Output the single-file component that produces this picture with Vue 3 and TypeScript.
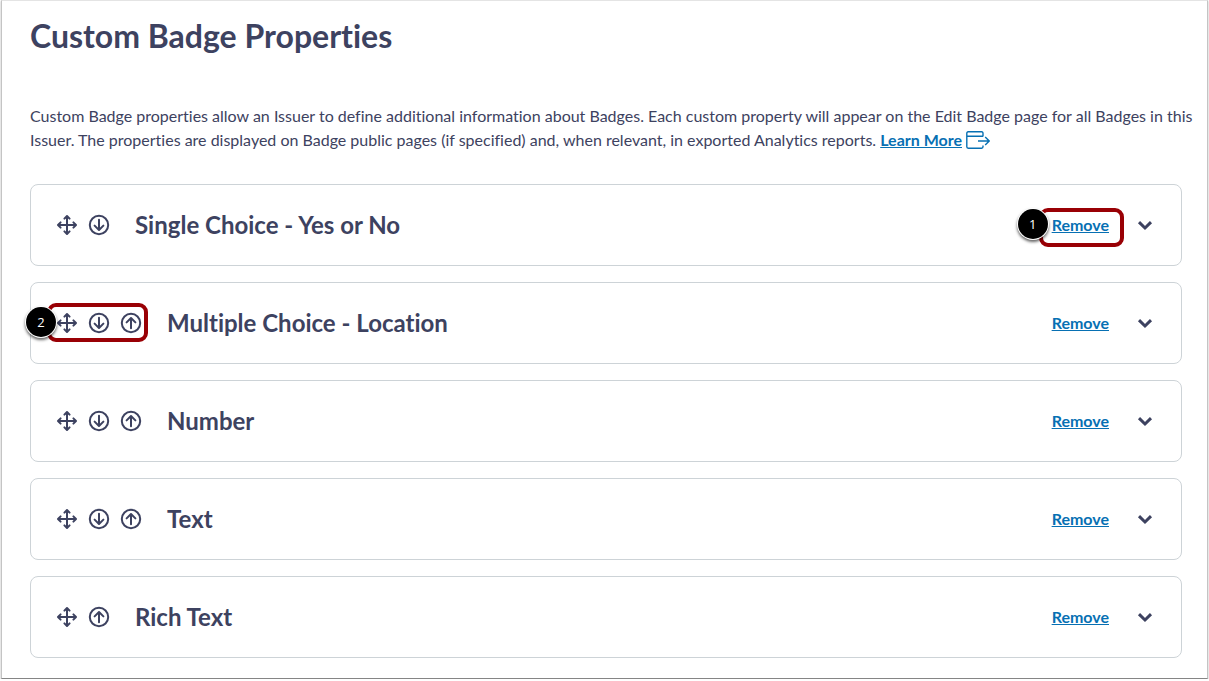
<script setup lang="ts">
interface BadgeProperty {
  name: string
  down: boolean
  up: boolean
  removeStep?: number
  orderStep?: number
}

const properties: BadgeProperty[] = [
  { name: 'Single Choice - Yes or No', down: true, up: false, removeStep: 1 },
  { name: 'Multiple Choice - Location', down: true, up: true, orderStep: 2 },
  { name: 'Number', down: true, up: true },
  { name: 'Text', down: true, up: true },
  { name: 'Rich Text', down: false, up: true },
]
</script>

<template>
  <main class="page">
    <h1 class="title">Custom Badge Properties</h1>
    <p class="intro">
      Custom Badge properties allow an Issuer to define additional information about Badges. Each custom property will
      appear on the Edit Badge page for all Badges in this Issuer. The properties are displayed on Badge public pages
      (if specified) and, when relevant, in exported Analytics reports.
      <a class="learn" href="#">Learn More<svg class="external" width="24" height="18" viewBox="0 0 24 18" aria-hidden="true">
        <path d="M17 5.500V2.200Q17 .8 15.600 .8H2.200Q.8 .8 .8 2.200V15.800Q.8 17.200 2.200 17.200H15.600Q17 17.200 17 15.800V14.500M.8 5.200H17M12 10H23M19.200 6L23.200 10L19.200 14" />
      </svg></a>
    </p>

    <ul class="list">
      <li v-for="item in properties" :key="item.name" class="card">
        <div class="order">
          <button class="icon-button" type="button" :aria-label="`Drag ${item.name}`">
            <svg class="icon" viewBox="0 0 24 24" aria-hidden="true">
              <path d="M12 3.200V20.800M3.200 12H20.800M9.400 5.600L12 3L14.600 5.600M9.400 18.400L12 21L14.600 18.400M5.600 9.400L3 12L5.600 14.600M18.400 9.400L21 12L18.400 14.600" />
            </svg>
          </button>
          <button v-if="item.down" class="icon-button" type="button" :aria-label="`Move ${item.name} down`">
            <svg class="icon" viewBox="0 0 24 24" aria-hidden="true">
              <circle cx="12" cy="12" r="9.200" />
              <path d="M12 6.800V16.800M7.600 12.600L12 17L16.400 12.600" />
            </svg>
          </button>
          <button v-if="item.up" class="icon-button" type="button" :aria-label="`Move ${item.name} up`">
            <svg class="icon" viewBox="0 0 24 24" aria-hidden="true">
              <circle cx="12" cy="12" r="9.200" />
              <path d="M12 17.200V7.200M7.600 11.400L12 7L16.400 11.400" />
            </svg>
          </button>
          <span v-if="item.orderStep" class="callout callout-order"><span class="step">{{ item.orderStep }}</span></span>
        </div>
        <h2 class="name">{{ item.name }}</h2>
        <div class="remove-wrap">
          <button class="remove" type="button">Remove</button>
          <span v-if="item.removeStep" class="callout callout-remove"><span class="step">{{ item.removeStep }}</span></span>
        </div>
        <button class="icon-button" type="button" :aria-label="`Expand ${item.name}`">
          <svg class="icon chevron" viewBox="0 0 24 24" aria-hidden="true">
            <path d="M6 9.200L12 15L18 9.200" />
          </svg>
        </button>
      </li>
    </ul>
  </main>
</template>

<style>
body {
  margin: 0;
  background: #fff;
}
</style>

<style scoped>
.page {
  box-sizing: border-box;
  margin: 0 1px;
  padding: 12px 25px 20px 28px;
  border: 1px solid #c4c4c4;
  border-top-color: #e4e4e4;
  border-bottom-color: #858585;
  box-shadow: 0 1px 2px rgba(0, 0, 0, 0.3);
  color: #3d4260;
  font-family: Lato, "Liberation Sans", sans-serif;
  font-variant-ligatures: none;
}

.title {
  margin: 0;
  font-size: 32px;
  font-weight: 700;
  line-height: 46px;
}

.intro {
  margin: 45px -16px 0 0;
  font-size: 16px;
  line-height: 24px;
}

.learn {
  color: #0770b3;
  font-weight: 700;
  text-decoration: underline;
  white-space: nowrap;
}

.external {
  margin-left: 4px;
  vertical-align: -3px;
  fill: none;
  stroke: currentColor;
  stroke-width: 1.4;
}

.list {
  display: flex;
  flex-direction: column;
  gap: 16px;
  margin: 32px 0 0;
  padding: 0;
  list-style: none;
}

.card {
  display: flex;
  align-items: center;
  box-sizing: border-box;
  min-height: 82px;
  padding: 16px 24px;
  border: 1px solid #cdd3d7;
  border-radius: 8px;
}

.order {
  position: relative;
  display: flex;
  gap: 8px;
}

.icon-button {
  display: block;
  width: 24px;
  height: 24px;
  padding: 0;
  border: 0;
  background: none;
  color: inherit;
  cursor: pointer;
}

.icon {
  display: block;
  width: 24px;
  height: 24px;
  fill: none;
  stroke: currentColor;
  stroke-width: 2;
  stroke-linecap: round;
  stroke-linejoin: round;
}

.chevron {
  stroke-width: 3;
  stroke-linecap: butt;
  stroke-linejoin: miter;
}

.name {
  flex: 1;
  margin: 0 0 0 24px;
  font-size: 24px;
  font-weight: 700;
  line-height: 32px;
}

.remove-wrap {
  position: relative;
  margin-right: 24px;
}

.remove {
  display: block;
  padding: 0;
  border: 0;
  background: none;
  color: #0770b3;
  font: inherit;
  font-size: 16px;
  font-weight: 700;
  line-height: 24px;
  text-decoration: underline;
  cursor: pointer;
}

.callout {
  position: absolute;
  border: 4px solid #990005;
  border-radius: 9px;
  pointer-events: none;
}

.callout-order {
  inset: -8px -5px -7px -8px;
}

.callout-remove {
  inset: -5px -15px -10px -13px;
}

.step {
  position: absolute;
  top: 0;
  left: -25px;
  width: 30px;
  height: 30px;
  border-radius: 50%;
  background: #000;
  box-shadow: 0 0 0 1px #fff, 0 2px 3px 1px rgba(0, 0, 0, 0.6);
  color: #fff;
  font-family: "Open Sans", "Noto Sans", sans-serif;
  font-size: 13px;
  line-height: 30px;
  text-align: center;
}

.callout-remove .step {
  top: -3px;
}
</style>
